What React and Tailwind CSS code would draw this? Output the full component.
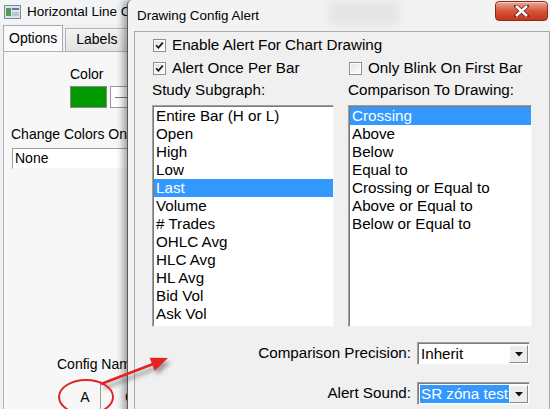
const subgraphs = [
  'Entire Bar (H or L)',
  'Open',
  'High',
  'Low',
  'Last',
  'Volume',
  '# Trades',
  'OHLC Avg',
  'HLC Avg',
  'HL Avg',
  'Bid Vol',
  'Ask Vol',
]

const comparisons = [
  'Crossing',
  'Above',
  'Below',
  'Equal to',
  'Crossing or Equal to',
  'Above or Equal to',
  'Below or Equal to',
]

const Check = ({ checked }) => (
  <span className="w-[13px] h-[13px] shrink-0 border border-[#8e8f8f] bg-white p-[1px]">
    <span className="w-full h-full flex items-center justify-center bg-gradient-to-br from-[#e2e2e2] to-[#fdfdfd]">
      {checked && (
        <svg width="9" height="9" viewBox="0 0 9 9">
          <path d="M1.2 4.3 L3.4 6.8 L7.8 1.6" stroke="#151515" strokeWidth="1.7" fill="none" />
        </svg>
      )}
    </span>
  </span>
)

const CheckRow = ({ checked, label }) => (
  <div className="flex items-center gap-[6px] h-[18px] pl-[1px]">
    <Check checked={checked} />
    <span className="whitespace-nowrap">{label}</span>
  </div>
)

const ListBox = ({ items, selected }) => (
  <div className="h-[222px] bg-white border border-t-[#a0a0a0] border-l-[#a0a0a0] border-r-[#f4f4f4] border-b-[#f4f4f4] shadow-[inset_1px_1px_0_#7a7a7a] pt-[1px] pl-[1px]">
    {items.map(item => (
      <div
        key={item}
        className={
          item === selected
            ? 'h-[18px] leading-[18px] pl-[2px] bg-[#3399ff] text-white whitespace-nowrap'
            : 'h-[18px] leading-[18px] pl-[2px] whitespace-nowrap'
        }
      >
        {item}
      </div>
    ))}
  </div>
)

const DropArrow = () => (
  <div className="w-[19px] bg-[#ececec] border border-t-white border-l-white border-r-[#8a8a8a] border-b-[#8a8a8a] flex items-center justify-center">
    <svg width="8" height="5" viewBox="0 0 8 5">
      <path d="M0 0 H8 L4 4.5 Z" fill="#111" />
    </svg>
  </div>
)

const Combo = ({ value, selected }) => (
  <div className="w-[113px] h-[23px] flex bg-white border border-t-[#a0a0a0] border-l-[#a0a0a0] border-r-[#f4f4f4] border-b-[#f4f4f4] shadow-[inset_1px_1px_0_#7a7a7a] pt-[2px] pl-[2px] pb-[1px] pr-[1px]">
    <div
      className={
        selected
          ? 'flex-1 overflow-hidden whitespace-nowrap bg-[#3399ff] text-white leading-[18px] pl-[1px]'
          : 'flex-1 overflow-hidden whitespace-nowrap leading-[18px] pl-[1px]'
      }
    >
      {value}
    </div>
    <DropArrow />
  </div>
)

export default function App() {
  return (
    <div className="relative w-[550px] h-[409px] overflow-hidden bg-[#f0f0f0] font-['Liberation_Sans',Arial,sans-serif] text-black">
      {/* background window, cut where the dialog covers it */}
      <div className="absolute left-0 top-0 w-[127px] h-[409px] overflow-hidden bg-[#f0f0f0]">
        <div className="w-[300px]">
          <div className="h-[24px] bg-[#f3f4f6] flex items-center pl-[4px] gap-[6px] text-[13.5px]">
            <svg width="17" height="14" viewBox="0 0 17 14">
              <rect x="0.5" y="0.5" width="16" height="13" fill="#dce4ec" stroke="#7d8a99" />
              <rect x="2" y="3" width="5" height="8" fill="#4f9a5a" />
              <rect x="8" y="3" width="7" height="2" fill="#5a78a8" />
              <rect x="8" y="7" width="7" height="4" fill="#b9c6d4" />
            </svg>
            <span className="w-[100px] overflow-hidden whitespace-nowrap">Horizontal Line Config</span>
          </div>
          <div className="flex items-end h-[27px] pl-[3px] text-[14px]">
            <div className="h-[26px] px-[5px] bg-[#fafafa] border border-b-0 border-[#a9adb3] leading-[24px] -mr-px relative z-10">
              Options
            </div>
            <div className="h-[23px] ml-[3px] px-[10px] bg-gradient-to-b from-[#f2f2f2] to-[#e3e3e3] border border-b-0 border-[#b0b4ba] leading-[21px]">
              Labels
            </div>
          </div>
          <div className="ml-[3px] h-[360px] bg-[#f7f7f7] border border-[#b0b4ba] text-[14px]">
            <div className="pl-[66px] pt-[13px] leading-[18px]">Color</div>
            <div className="flex pl-[66px] mt-[3px] gap-[3px]">
              <div className="w-[37px] h-[22px] bg-[#009900] border border-[#888]" />
              <div className="w-[30px] h-[22px] bg-white border border-[#999] flex items-center">
                <div className="w-full h-px bg-[#777] ml-[4px]" />
              </div>
            </div>
            <div className="pl-[7px] mt-[17px] leading-[18px] whitespace-nowrap">Change Colors On</div>
            <div className="ml-[8px] mt-[5px] w-[140px] h-[21px] bg-white border border-t-[#a0a0a0] border-l-[#a0a0a0] border-r-[#f4f4f4] border-b-[#f4f4f4] pl-[2px] leading-[19px]">
              None
            </div>
            <div className="ml-[53px] mt-[186px] w-[70px] overflow-hidden leading-[18px] whitespace-nowrap">Config Name</div>
            <div className="flex pl-[66px] mt-[8px] h-[30px]">
              <div className="w-[31px] h-[30px] border-r border-[#9a9a9a] flex justify-center pt-[6px]">A</div>
              <div className="ml-[24px] w-[6px] overflow-hidden pt-[6px]">Clear</div>
            </div>
          </div>
        </div>
      </div>

      {/* dialog */}
      <div className="absolute left-[127px] top-0 w-[426px] h-[420px] bg-[#f3f3f3] border-l border-[#5a5a5a] rounded-tl-[5px] shadow-[-4px_0_7px_rgba(0,0,0,0.35)] flex flex-col">
        <div className="relative h-[31px] shrink-0 pl-[9px] pt-[7px] text-[13.4px] leading-[18px]">
          Drawing Config Alert
          <div className="absolute left-[200px] top-[2px] w-[72px] h-[24px] bg-[#dcdcdc] blur-[4px] opacity-60" />
          <div className="absolute left-[367px] top-[1px] w-[53px] h-[20px] rounded-[4px] border border-[#8c2a1c] bg-gradient-to-b from-[#eaa896] via-[#d6543a] to-[#c1361c] shadow-[inset_0_1px_0_rgba(255,255,255,0.5)] flex items-center justify-center">
            <svg width="15" height="12" viewBox="0 0 15 12">
              <path d="M2 1 L13 11 M13 1 L2 11" stroke="#6d2a20" strokeWidth="4" strokeLinecap="square" />
              <path d="M2 1 L13 11 M13 1 L2 11" stroke="#ffffff" strokeWidth="2.4" />
            </svg>
          </div>
        </div>
        <div className="flex-1 ml-[6px] mr-[3px] bg-[#f0f0f0] border border-[#a6abb1] pl-[17px] pt-[4px] text-[15.2px]">
          <div className="w-[380px]">
            <CheckRow checked label="Enable Alert For Chart Drawing" />
            <div className="grid grid-cols-[182px_184px] gap-x-[14px] mt-[5px]">
              <CheckRow checked label="Alert Once Per Bar" />
              <CheckRow label="Only Blink On First Bar" />
              <div className="mt-[4px] leading-[18px]">Study Subgraph:</div>
              <div className="mt-[4px] leading-[18px]">Comparison To Drawing:</div>
              <div className="mt-[6px]">
                <ListBox items={subgraphs} selected="Last" />
              </div>
              <div className="mt-[6px]">
                <ListBox items={comparisons} selected="Crossing" />
              </div>
            </div>
            <div className="flex justify-end items-center gap-[6px] mt-[15px] pr-[2px]">
              <span>Comparison Precision:</span>
              <Combo value="Inherit" />
            </div>
            <div className="flex justify-end items-center gap-[6px] mt-[17px] pr-[2px]">
              <span>Alert Sound:</span>
              <Combo value="SR zóna test" selected />
            </div>
          </div>
        </div>
      </div>

      {/* annotation */}
      <svg className="absolute inset-0 pointer-events-none" width="550" height="409" viewBox="0 0 550 409">
        <defs>
          <filter id="sh" x="-20%" y="-20%" width="140%" height="140%">
            <feGaussianBlur stdDeviation="2" />
          </filter>
        </defs>
        <g transform="translate(3 4)" filter="url(#sh)" opacity="0.45">
          <path d="M101 384 L153 364" stroke="#333" strokeWidth="3" />
          <path d="M168 358 L154.7 370.7 L149.7 357.7 Z" fill="#333" />
        </g>
        <ellipse cx="86" cy="397" rx="27" ry="17" fill="none" stroke="#e42222" strokeWidth="2" />
        <path d="M101 384 L153 364" stroke="#e42222" strokeWidth="2.5" />
        <path d="M168 358 L154.7 370.7 L149.7 357.7 Z" fill="#e42222" />
      </svg>
    </div>
  )
}
